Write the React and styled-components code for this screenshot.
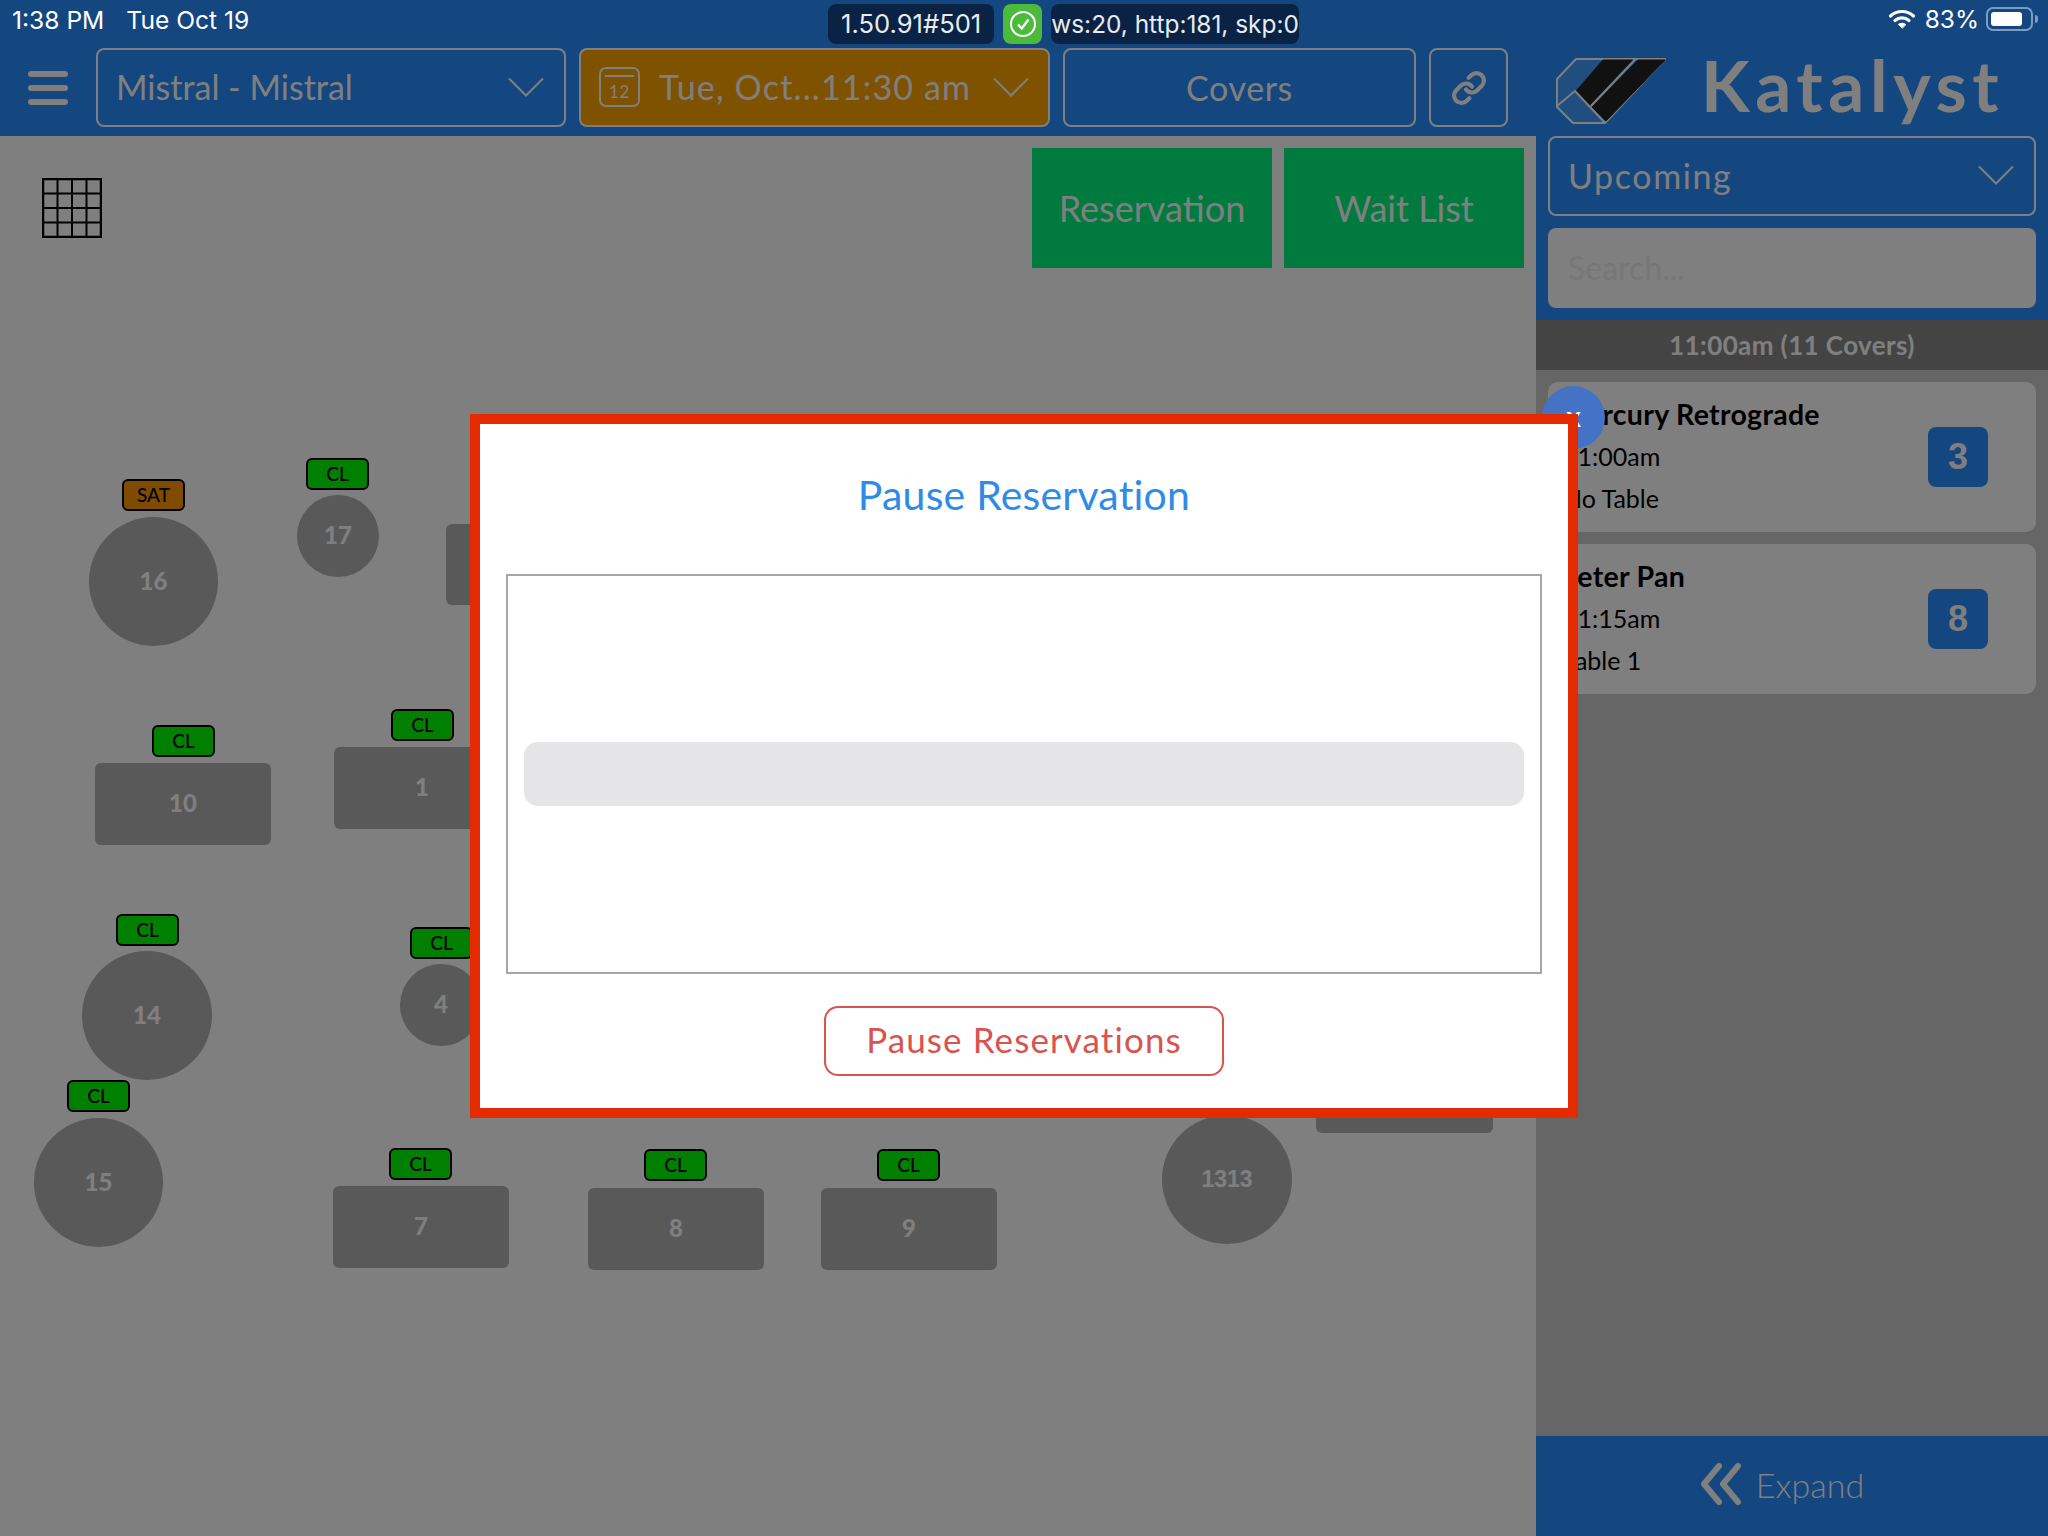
import React from 'react';
import styled, { createGlobalStyle } from 'styled-components';
import { Link } from 'lucide-react';

const UI_FONT = '"Lato", "Noto Sans", sans-serif';
const SYS_FONT = '"Inter", "Liberation Sans", sans-serif';
const BLUE = '#288cfe';

const GlobalStyle = createGlobalStyle`
  html, body { margin: 0; padding: 0; background: #fff; }
  * { box-sizing: border-box; }
`;

const Page = styled.div`
  position: relative;
  width: 2048px;
  height: 1536px;
  overflow: hidden;
  display: flex;
  flex-direction: column;
  font-family: ${UI_FONT};
`;

const StatusBar = styled.div`
  position: relative;
  z-index: 2;
  height: 48px;
  flex: none;
  display: flex;
  align-items: flex-start;
  background: #14467f;
  color: #fff;
  font-family: ${SYS_FONT};
`;

const StatusLeft = styled.div`
  width: 828px;
  padding: 6px 0 0 12px;
  display: flex;
  gap: 22px;
  font-size: 24.6px;
  line-height: 28px;
`;

const Pill = styled.div`
  height: 40px;
  margin-top: 4px;
  padding: 0 ${p => p.$pad}px;
  border-radius: 8px;
  background: #0a2344;
  font-size: ${p => p.$size}px;
  line-height: 40px;
  color: #e8ecf2;
  white-space: nowrap;
`;

const SyncBadge = styled.div`
  width: 39px;
  height: 40px;
  margin: 4px 9px 0;
  border-radius: 8px;
  background: #4cbb3c;
  display: flex;
  align-items: center;
  justify-content: center;
`;

const StatusRight = styled.div`
  margin-left: auto;
  padding: 5px 15px 0 0;
  display: flex;
  align-items: center;
  gap: 7px;
  font-size: 24.5px;
  line-height: 28px;
`;

const Battery = styled.div`
  position: relative;
  width: 47px;
  height: 24px;
  padding: 3px;
  border: 2px solid #7c9cc4;
  border-radius: 7px;
  &::after {
    content: '';
    position: absolute;
    right: -7px;
    top: 6px;
    width: 3px;
    height: 8px;
    border-radius: 0 3px 3px 0;
    background: #7c9cc4;
  }
`;

const BatteryLevel = styled.div`
  width: 83%;
  height: 100%;
  border-radius: 3px;
  background: #fff;
`;

const Main = styled.div`
  flex: 1;
  display: flex;
  min-height: 0;
`;

const LeftColumn = styled.div`
  width: 1536px;
  display: flex;
  flex-direction: column;
`;

const Toolbar = styled.div`
  height: 88px;
  flex: none;
  padding-left: 28px;
  display: flex;
  background: ${BLUE};
  gap: 13px;
`;

const Hamburger = styled.div`
  width: 40px;
  height: 79px;
  margin-right: 15px;
  display: flex;
  flex-direction: column;
  justify-content: center;
  gap: 8px;
  span {
    height: 6px;
    border-radius: 3px;
    background: #fff;
  }
`;

const SelectBox = styled.div`
  height: ${p => p.$h || 79}px;
  width: ${p => p.$w}px;
  padding: 0 ${p => p.$right}px 2px ${p => p.$left}px;
  display: flex;
  align-items: center;
  justify-content: ${p => (p.$center ? 'center' : 'flex-start')};
  border: 2px solid #fff;
  border-radius: 8px;
  background: ${p => p.$bg || 'transparent'};
  color: #fff;
  font-size: 34px;
  letter-spacing: 0.6px;
`;

const SelectLabel = styled.span`
  flex: 1;
  margin-left: ${p => p.$gap || 0}px;
  letter-spacing: ${p => p.$spacing}px;
  white-space: nowrap;
`;

const Floor = styled.div`
  position: relative;
  flex: 1;
  background: #fff;
`;

const FloorTop = styled.div`
  padding: 12px 12px 0 42px;
  display: flex;
  align-items: flex-start;
  gap: 12px;
`;

const GridIcon = styled.svg`
  margin: 30px auto 0 0;
`;

const ActionButton = styled.div`
  width: 240px;
  height: 120px;
  display: flex;
  align-items: center;
  justify-content: center;
  background: #00f47c;
  color: #fff;
  font-size: 36px;
`;

const FloorCanvas = styled.div`
  position: absolute;
  left: 0;
  top: 136px;
  width: 1536px;
  height: 1400px;
`;

const Seat = styled.div`
  position: absolute;
  left: ${p => p.$x}px;
  top: ${p => p.$y - 136}px;
  width: ${p => p.$w}px;
  height: ${p => p.$h}px;
  padding-bottom: ${p => (p.$plain ? 0 : 3)}px;
  display: flex;
  align-items: center;
  justify-content: center;
  border-radius: ${p => (p.$round ? '50%' : '6px')};
  background: #b2b2b2;
  color: #fff;
  font-family: ${p => (p.$plain ? '"Liberation Sans", sans-serif' : UI_FONT)};
  font-size: ${p => (p.$plain ? 23 : 24)}px;
  font-weight: ${p => (p.$plain ? 700 : 900)};
`;

const Tag = styled.div`
  position: absolute;
  left: ${p => p.$x}px;
  top: ${p => p.$y - 136}px;
  width: 63px;
  height: 32px;
  padding-bottom: 2px;
  display: flex;
  align-items: center;
  justify-content: center;
  border: 2px solid #000;
  border-radius: 6px;
  background: ${p => (p.$sat ? '#ff9600' : '#00ff00')};
  color: #000;
  font-size: 19px;
  font-weight: 500;
`;

const Sidebar = styled.div`
  width: 512px;
  display: flex;
  flex-direction: column;
  background: #cccccc;
`;

const SideHead = styled.div`
  padding: 0 12px 12px;
  background: ${BLUE};
`;

const Brand = styled.div`
  height: 88px;
  padding-left: 8px;
  display: flex;
  align-items: center;
  gap: 33px;
`;

const BrandName = styled.div`
  padding-bottom: 14px;
  color: #fff;
  font-size: 71px;
  font-weight: 700;
  line-height: 74px;
  letter-spacing: 5.6px;
`;

const SearchInput = styled.input`
  display: block;
  width: 100%;
  height: 80px;
  margin-top: 12px;
  padding: 0 20px 2px;
  border: none;
  border-radius: 8px;
  background: #fff;
  font-family: ${UI_FONT};
  font-size: 32px;
  &::placeholder { color: #eee; }
`;

const SectionTitle = styled.div`
  height: 50px;
  display: flex;
  align-items: center;
  justify-content: center;
  background: #888;
  color: #fff;
  font-size: 26px;
  font-weight: 700;
  letter-spacing: 0.4px;
`;

const CardList = styled.div`
  flex: 1;
  padding: 12px;
  display: flex;
  flex-direction: column;
  gap: 12px;
`;

const Card = styled.div`
  height: 150px;
  padding: 11px 48px 0 15px;
  display: flex;
  align-items: flex-start;
  justify-content: space-between;
  border-radius: 10px;
  background: #fff;
  color: #000;
`;

const CardName = styled.div`
  margin-left: -3px;
  font-size: 28.5px;
  font-weight: 700;
  line-height: 42px;
  letter-spacing: 0.3px;
`;

const CardLine = styled.div`
  font-size: 25px;
  line-height: 42px;
`;

const CountBadge = styled.div`
  width: 60px;
  height: 60px;
  margin-top: 34px;
  display: flex;
  align-items: center;
  justify-content: center;
  border-radius: 8px;
  background: ${BLUE};
  color: #fff;
  font-family: "Liberation Sans", sans-serif;
  font-size: 36px;
  font-weight: 700;
`;

const ExpandBar = styled.div`
  height: 100px;
  flex: none;
  padding: 0 20px 4px 0;
  display: flex;
  align-items: center;
  justify-content: center;
  gap: 14px;
  background: ${BLUE};
  color: #fff;
  font-size: 34px;
  font-weight: 300;
`;

const Backdrop = styled.div`
  position: absolute;
  inset: 0;
  z-index: 1;
  padding-bottom: 4px;
  display: flex;
  align-items: center;
  justify-content: center;
  background: rgba(0, 0, 0, 0.5);
`;

const Modal = styled.div`
  position: relative;
  width: 1108px;
  height: 704px;
  padding: 47px 26px 0;
  display: flex;
  flex-direction: column;
  align-items: center;
  border: 10px solid #e62a00;
  background: #fff;
`;

const CloseButton = styled.div`
  position: absolute;
  top: -38px;
  right: -37px;
  z-index: -1;
  width: 63px;
  height: 63px;
  padding-top: 15px;
  border-radius: 50%;
  background: #4472c4;
  color: #fff;
  font-size: 28px;
  font-weight: 700;
  line-height: 30px;
  text-align: center;
`;

const ModalTitle = styled.div`
  height: 48px;
  color: #2f8be6;
  font-size: 41px;
  line-height: 48px;
  letter-spacing: 0.2px;
`;

const ReasonBox = styled.div`
  width: 100%;
  height: 400px;
  margin-top: 55px;
  padding: 0 16px;
  display: flex;
  align-items: center;
  border: 2px solid #a6a6a6;
`;

const ReasonPicker = styled.div`
  width: 100%;
  height: 64px;
  border-radius: 14px;
  background: #e5e5e7;
`;

const PauseButton = styled.div`
  width: 400px;
  height: 70px;
  margin-top: 32px;
  padding-bottom: 4px;
  display: flex;
  align-items: center;
  justify-content: center;
  border: 2px solid #d9534f;
  border-radius: 14px;
  color: #d9534f;
  font-size: 35px;
  letter-spacing: 1.1px;
`;

const Chevron = () => (
  <svg width="36" height="20" viewBox="0 0 36 20" fill="none" stroke="#fff" strokeWidth="2">
    <path d="M1 1.5 L18 18.5 L35 1.5" />
  </svg>
);

const seats = [
  { id: '16', x: 89, y: 517, w: 129, h: 129, round: true },
  { id: '17', x: 297, y: 495, w: 82, h: 82, round: true },
  { id: '', x: 446, y: 524, w: 176, h: 81 },
  { id: '10', x: 95, y: 763, w: 176, h: 82 },
  { id: '1', x: 334, y: 747, w: 176, h: 82 },
  { id: '14', x: 82, y: 951, w: 130, h: 129, round: true },
  { id: '4', x: 400, y: 964, w: 82, h: 82, round: true },
  { id: '15', x: 34, y: 1118, w: 129, h: 129, round: true },
  { id: '7', x: 333, y: 1186, w: 176, h: 82 },
  { id: '8', x: 588, y: 1188, w: 176, h: 82 },
  { id: '9', x: 821, y: 1188, w: 176, h: 82 },
  { id: '1313', x: 1162, y: 1115, w: 130, h: 129, round: true, plain: true },
  { id: '', x: 1316, y: 1051, w: 177, h: 82 },
];

const tags = [
  { label: 'SAT', x: 122, y: 479, sat: true },
  { label: 'CL', x: 306, y: 458 },
  { label: 'CL', x: 152, y: 725 },
  { label: 'CL', x: 391, y: 709 },
  { label: 'CL', x: 116, y: 914 },
  { label: 'CL', x: 410, y: 927 },
  { label: 'CL', x: 67, y: 1080 },
  { label: 'CL', x: 389, y: 1148 },
  { label: 'CL', x: 644, y: 1149 },
  { label: 'CL', x: 877, y: 1149 },
];

const reservations = [
  { name: 'Mercury Retrograde', time: '11:00am', table: 'No Table', covers: 3 },
  { name: 'Peter Pan', time: '11:15am', table: 'Table 1', covers: 8 },
];

export default function App() {
  return (
    <Page>
      <GlobalStyle />
      <StatusBar>
        <StatusLeft>
          <span>1:38 PM</span>
          <span>Tue Oct 19</span>
        </StatusLeft>
        <Pill $pad={13} $size={25.6}>1.50.91#501</Pill>
        <SyncBadge>
          <svg width="28" height="28" viewBox="0 0 28 28" fill="none" stroke="#fff" strokeWidth="2">
            <circle cx="14" cy="14" r="12" />
            <path d="M9 14.5 L12.8 18.5 L19.5 9.5" strokeWidth="2.4" />
          </svg>
        </SyncBadge>
        <Pill $pad={0} $size={24.4}>ws:20, http:181, skp:0</Pill>
        <StatusRight>
          <svg width="28" height="22" viewBox="0 0 28 22" fill="none" stroke="#fff" strokeLinecap="round" style={{ marginRight: 2 }}>
            <path d="M2.5 8 C9 2 19 2 25.5 8" strokeWidth="3.2" />
            <path d="M7 12.5 C11 9 17 9 21 12.5" strokeWidth="3.2" />
            <path d="M14 20 L10.4 16.4 C12.4 14.8 15.6 14.8 17.6 16.4 Z" fill="#fff" strokeWidth="1" />
          </svg>
          <span>83%</span>
          <Battery><BatteryLevel /></Battery>
        </StatusRight>
      </StatusBar>

      <Main>
        <LeftColumn>
          <Toolbar>
            <Hamburger><span /><span /><span /></Hamburger>
            <SelectBox $w={470} $left={18} $right={20}>
              <SelectLabel $spacing={0}>Mistral - Mistral</SelectLabel>
              <Chevron />
            </SelectBox>
            <SelectBox $w={471} $left={18} $right={19} $bg="#ffa400">
              <svg width="41" height="40" viewBox="0 0 41 40" fill="none" stroke="#fff" strokeWidth="2">
                <rect x="1" y="1" width="39" height="38" rx="6" />
                <path d="M6 9 H35" />
                <text x="20.5" y="31" textAnchor="middle" fontSize="17" fill="#fff" stroke="none" fontFamily={UI_FONT}>12</text>
              </svg>
              <SelectLabel $gap={19} $spacing={1.15}>Tue, Oct...11:30 am</SelectLabel>
              <Chevron />
            </SelectBox>
            <SelectBox $w={353} $center>Covers</SelectBox>
            <SelectBox $w={79} $center>
              <Link size={36} strokeWidth={2.8} color="#fff" />
            </SelectBox>
          </Toolbar>
          <Floor>
            <FloorTop>
              <GridIcon width="60" height="60" viewBox="0 0 60 60" fill="none" stroke="#000" strokeWidth="2">
                <rect x="1" y="1" width="58" height="58" strokeWidth="2.5" />
                <path d="M15.5 1 V59 M30 1 V59 M44.5 1 V59 M1 15.5 H59 M1 30 H59 M1 44.5 H59" />
              </GridIcon>
              <ActionButton>Reservation</ActionButton>
              <ActionButton>Wait List</ActionButton>
            </FloorTop>
          </Floor>
        </LeftColumn>

        <Sidebar>
          <SideHead>
            <Brand>
              <svg width="112" height="68" viewBox="16 14 112 68" strokeLinejoin="round">
                <path d="M36 15 H125 L65 79 H33 L17 63 V35 Z" fill="#3e9cff" stroke="#fff" strokeWidth="2" />
                <path d="M63 16 H93 L50 61 L36 47 Z" fill="#222" stroke="#222" />
                <path d="M98 16 H125 L66 77 L52 63 Z" fill="#222" stroke="#222" />
                <path d="M95.5 15 L51 62" fill="none" stroke="#fff" strokeWidth="2" />
                <path d="M17 62 L35 47 L65 79" fill="none" stroke="#fff" strokeWidth="2" />
              </svg>
              <BrandName>Katalyst</BrandName>
            </Brand>
            <SelectBox $w={488} $h={80} $left={18} $right={20}>
              <SelectLabel $spacing={1.6}>Upcoming</SelectLabel>
              <Chevron />
            </SelectBox>
            <SearchInput placeholder="Search..." />
          </SideHead>
          <SectionTitle>11:00am (11 Covers)</SectionTitle>
          <CardList>
            {reservations.map(r => (
              <Card key={r.name}>
                <div>
                  <CardName>{r.name}</CardName>
                  <CardLine>{r.time}</CardLine>
                  <CardLine>{r.table}</CardLine>
                </div>
                <CountBadge>{r.covers}</CountBadge>
              </Card>
            ))}
          </CardList>
          <ExpandBar>
            <svg width="42" height="42" viewBox="0 0 42 42" fill="none" stroke="#fff" strokeWidth="6" strokeLinecap="round" strokeLinejoin="round">
              <path d="M19 3 L4 21 L19 39" />
              <path d="M38 3 L23 21 L38 39" />
            </svg>
            <span>Expand</span>
          </ExpandBar>
        </Sidebar>
      </Main>

      {/* floor items sit on their own canvas, below the status bar and toolbar */}
      <FloorCanvas>
        {seats.map((s, i) => (
          <Seat key={i} $x={s.x} $y={s.y} $w={s.w} $h={s.h} $round={s.round} $plain={s.plain}>{s.id}</Seat>
        ))}
        {tags.map((t, i) => (
          <Tag key={i} $x={t.x} $y={t.y} $sat={t.sat}>{t.label}</Tag>
        ))}
      </FloorCanvas>

      <Backdrop>
        <Modal>
          <CloseButton>x</CloseButton>
          <ModalTitle>Pause Reservation</ModalTitle>
          <ReasonBox><ReasonPicker /></ReasonBox>
          <PauseButton>Pause Reservations</PauseButton>
        </Modal>
      </Backdrop>
    </Page>
  );
}
